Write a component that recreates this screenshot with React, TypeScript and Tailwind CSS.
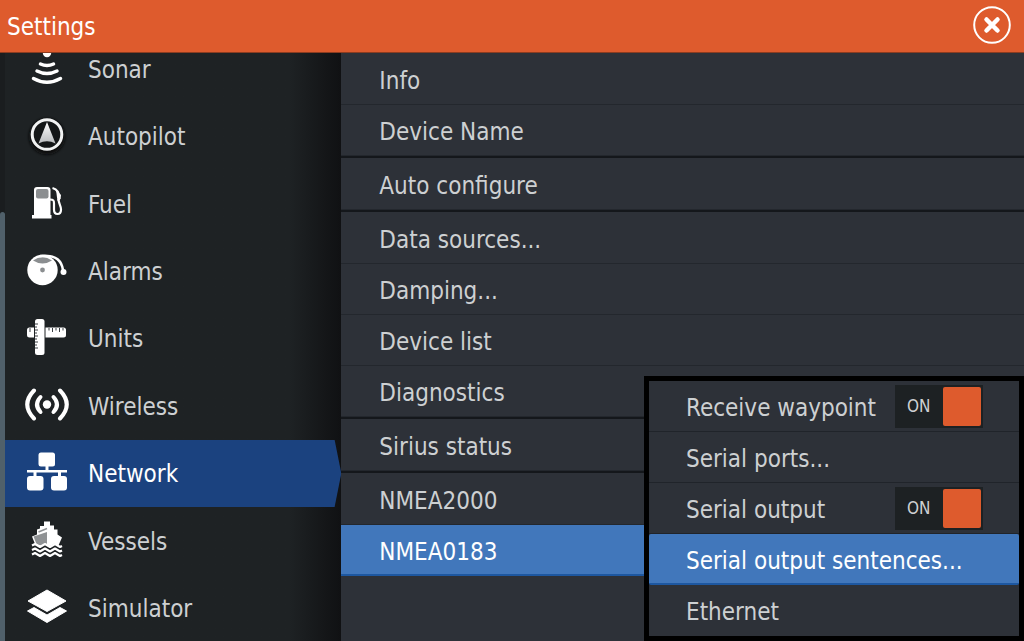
import type { ReactNode } from 'react';

const SonarIcon = () => (
  <svg viewBox="0 0 44 44" className="w-11 h-11" fill="none" stroke="#fff" strokeWidth="3.500" strokeLinecap="round">
    <circle cx="22" cy="6" r="4.200" fill="#fff" stroke="none" />
    <path d="M15.500 17q6.500 3 13 0M12 24q10 5 20 0M8.500 31.500q13.500 7.500 27 0" />
  </svg>
);

const AutopilotIcon = () => (
  <svg viewBox="0 0 44 44" className="w-11 h-11">
    <defs>
      <linearGradient id="arrow" x1="0" y1="0" x2="0" y2="1">
        <stop offset="0" stopColor="#fff" />
        <stop offset="1" stopColor="#b9bbbd" />
      </linearGradient>
      <filter id="glow" x="-30%" y="-30%" width="160%" height="160%">
        <feGaussianBlur stdDeviation="1.500" />
      </filter>
    </defs>
    <circle cx="22" cy="22.500" r="18" fill="#0c0e0f" filter="url(#glow)" />
    <circle cx="22" cy="20.500" r="14.800" fill="#141617" stroke="#f1f2f2" strokeWidth="3" />
    <path d="M22 8l8.500 21.500q-8.500-4.500-17 0z" fill="url(#arrow)" />
  </svg>
);

const FuelIcon = () => (
  <svg viewBox="0 0 44 44" className="w-11 h-11">
    <path d="M9 8q0-3 3-3h10.500q3 0 3 3V33h1V36.500H7V33h2z" fill="#fff" />
    <rect x="11" y="7" width="12.500" height="9.500" rx="2" fill="#8b8e90" />
    <path d="M25 17.500c3.500 0 4 1 4 4v6c0 6 7 6 7 0 0-4-2.500-6-2.500-10.500" fill="none" stroke="#fff" strokeWidth="2.200" />
    <path d="M27.500 6c4 1 7 5 7 11" fill="none" stroke="#fff" strokeWidth="2.200" />
    <path d="M31 8l5 5-1 5-2.500 1z" fill="#fff" />
  </svg>
);

const AlarmIcon = () => (
  <svg viewBox="0 0 44 44" className="w-11 h-11">
    <circle cx="17.500" cy="21" r="15.200" fill="#fff" />
    <path d="M8 11.500q9.500-6.500 19 0-9.500 6-19 0z" fill="#8b8e90" />
    <circle cx="17.500" cy="21" r="2.400" fill="#8b8e90" />
    <path d="M15 7C28 5.500 36.500 10 38 21" fill="none" stroke="#fff" strokeWidth="2.500" />
    <circle cx="38.500" cy="23" r="3" fill="#fff" />
  </svg>
);

const UnitsIcon = () => (
  <svg viewBox="0 0 44 44" className="w-11 h-11">
    <rect x="2" y="11.500" width="39" height="10" rx="2.500" fill="#fff" />
    <rect x="9" y="3" width="11.500" height="37" fill="#1e2224" />
    <rect x="10" y="3" width="9.500" height="36" rx="2.500" fill="#fff" />
    <path
      d="M5 12v4M24 12v2.500M27.500 12v4M31 12v2.500M34.500 12v4M38 12v2.500M10 8h3M10 11h2M10 14h3M10 17h2M10 20h3M10 23h2M10 26h3M10 29h2M10 32h3"
      stroke="#3a3f42"
      strokeWidth="1"
    />
  </svg>
);

const WirelessIcon = () => (
  <svg viewBox="0 0 44 44" className="w-11 h-11" fill="none" stroke="#fff" strokeLinecap="round" strokeWidth="4">
    <circle cx="22" cy="20.500" r="4.200" fill="#fff" stroke="none" />
    <path d="M15.500 13q-7 7.500 0 15M28.500 13q7 7.500 0 15" />
    <path d="M9 6.500q-13.500 14 0 28M35 6.500q13.500 14 0 28" />
  </svg>
);

const NetworkIcon = () => (
  <svg viewBox="0 0 44 44" className="w-11 h-11" fill="#fff">
    <rect x="13.500" y="1.500" width="16.500" height="14" rx="2.500" />
    <rect x="2" y="25" width="16.500" height="14.500" rx="3" />
    <rect x="26" y="25" width="16" height="14.500" rx="3" />
    <path d="M20.500 15h3v4H42v2.500h-6V26h-3v-4.500H11.500V26h-3v-4.500H2V19h18.500z" />
  </svg>
);

const VesselsIcon = () => (
  <svg viewBox="0 0 44 44" className="w-11 h-11">
    <path d="M19 2.500h6v4h4v4h3.500v5l4.500 3-4 9H11L7 17.500l5-2v-5l3-1V7h4z" fill="#fff" />
    <path d="M8.500 17.500L22 13v13.500l-8-.5-2.500-1z" fill="#8f9294" />
    <path d="M13.500 13l8.500-3.500" stroke="#8f9294" strokeWidth="1.500" />
    <path
      d="M7 26l2.500-1.500 5 3 5-3 5 3 5-3 5 3 2.500-1.500V37H7z"
      fill="#1e2224"
    />
    <path
      d="M7 26.500l3-1.500 5 3 5-3 5 3 5-3 5 3 2-1M7 31l3-1.500 5 3 5-3 5 3 5-3 5 3 2-1M7 35.500l3-1.500 5 3 5-3 5 3 5-3 5 3 2-1"
      fill="none"
      stroke="#fff"
      strokeWidth="2.200"
      strokeLinejoin="round"
    />
  </svg>
);

const SimulatorIcon = () => (
  <svg viewBox="0 0 44 44" className="w-11 h-11" fill="#fff" stroke="#fff" strokeWidth="1" strokeLinejoin="round">
    <path d="M22 4l19 11-19 10.500L3 15z" />
    <path d="M9 21.500l13 7.500 13-7.500 6.500 3.500L22 36.500 2.500 25z" />
  </svg>
);

const CATEGORIES: { label: string; icon: ReactNode; active?: boolean }[] = [
  { label: 'Sonar', icon: <SonarIcon /> },
  { label: 'Autopilot', icon: <AutopilotIcon /> },
  { label: 'Fuel', icon: <FuelIcon /> },
  { label: 'Alarms', icon: <AlarmIcon /> },
  { label: 'Units', icon: <UnitsIcon /> },
  { label: 'Wireless', icon: <WirelessIcon /> },
  { label: 'Network', icon: <NetworkIcon />, active: true },
  { label: 'Vessels', icon: <VesselsIcon /> },
  { label: 'Simulator', icon: <SimulatorIcon /> },
];

const GROUPS = [
  ['Info', 'Device Name'],
  ['Auto configure'],
  ['Data sources...', 'Damping...', 'Device list', 'Diagnostics'],
  ['Sirius status'],
  ['NMEA2000', 'NMEA0183'],
];

function Toggle({ label }: { label: string }) {
  return (
    <label className="flex h-[51px] items-center justify-between border-b border-[#20242a] pl-[37px] pr-9">
      <span className="pt-[3px]">{label}</span>
      <input type="checkbox" defaultChecked className="peer sr-only" />
      <span className="flex h-[43px] w-[88px] items-center justify-between bg-[#1d2123] pl-3 pr-0.5 text-[17px]">
        ON
        <span className="h-[39px] w-[38px] rounded-[2px] bg-[#de5b2d]" />
      </span>
    </label>
  );
}

function SubItem({ label, active = false }: { label: string; active?: boolean }) {
  return (
    <button
      className={
        active
          ? 'h-[51px] rounded-[2px] border-b-2 border-[#1d57a0] bg-[#4177bb] pl-[37px] pt-1 text-left text-white'
          : 'h-[51px] border-b border-[#20242a] pl-[37px] pt-[3px] text-left last:border-b-0'
      }
    >
      {label}
    </button>
  );
}

export default function App() {
  return (
    <div className="relative flex min-h-screen flex-col bg-[#2d3138] font-['DejaVu_Sans_Condensed','DejaVu_Sans',sans-serif] text-2xl text-[#cdd0d2]">
      <header className="flex h-[53px] items-center justify-between border-b border-[#8c3c20] bg-[#de5b2d] pb-0.5 pl-[7px] pr-3 text-white">
        <h1 className="pt-1">Settings</h1>
        <button aria-label="Close">
          <svg viewBox="0 0 40 40" className="h-10 w-10" fill="none" stroke="#fff" strokeLinecap="round">
            <circle cx="20" cy="20" r="17.800" strokeWidth="2" />
            <path d="M14.500 14.500l11 11M25.500 14.500L14.500 25.500" strokeWidth="4.500" />
          </svg>
        </button>
      </header>

      <div className="flex flex-1">
        <aside className="flex w-1/3 overflow-hidden bg-linear-to-r from-[#1e2224] from-85% to-[#101113]">
          <div className="flex w-[5px] flex-col justify-end bg-[#1a1d1f]">
            <div className="h-[73%] rounded-t-sm bg-[#50606a]" />
          </div>
          {/* scrolled a little, so the first entry slides under the header */}
          <nav className="-mb-px -mt-[18px] flex flex-1 flex-col">
            {CATEGORIES.map((c) => (
              <button
                key={c.label}
                className={
                  c.active
                    ? 'flex flex-1 items-center gap-[19px] bg-[#1b427f] pl-5 text-left text-white [clip-path:polygon(0_0,98%_0,100%_50%,98%_100%,0_100%)]'
                    : 'flex flex-1 items-center gap-[19px] pl-5 text-left'
                }
              >
                {c.icon}
                <span className="pt-0.5">{c.label}</span>
              </button>
            ))}
          </nav>
        </aside>

        <main className="flex flex-1 flex-col gap-[3px] pt-px">
          {GROUPS.map((group) => (
            <div key={group[0]} className="flex flex-col shadow-[0_2px_0_#14171b] last:shadow-none">
              {group.map((item) => (
                <button
                  key={item}
                  className={
                    item === 'NMEA0183'
                      ? 'h-[51px] border-b-2 border-[#1d57a0] bg-[#4177bb] pl-[38px] pt-1 text-left text-white'
                      : 'h-[51px] border-b border-[#23272d] pl-[38px] pt-[3px] text-left'
                  }
                >
                  {item}
                </button>
              ))}
            </div>
          ))}
        </main>
      </div>

      <div className="absolute bottom-0 right-0 flex w-[380px] flex-col border-[5px] border-black bg-[#2d3138]">
        <Toggle label="Receive waypoint" />
        <SubItem label="Serial ports..." />
        <Toggle label="Serial output" />
        <SubItem label="Serial output sentences..." active />
        <SubItem label="Ethernet" />
      </div>
    </div>
  );
}
